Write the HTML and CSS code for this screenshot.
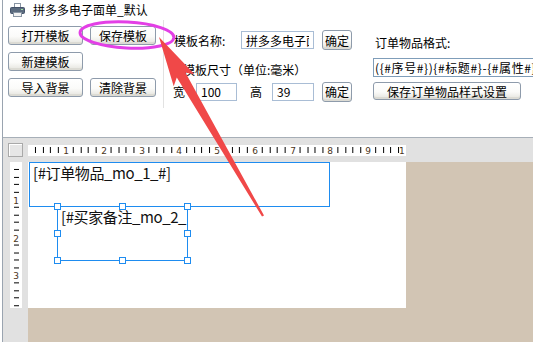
FILE: index.html
```html
<!DOCTYPE html>
<html lang="zh-CN">
<head>
    <meta charset="UTF-8">
    <title>拼多多电子面单_默认</title>
    <link rel="stylesheet" href="styles.css">
</head>
<body>
    <div class="window">
        <div class="title-bar">
            <svg class="app-icon" width="15" height="14" viewBox="0 0 15 14">
                <rect x="4.5" y="0.5" width="6" height="4" fill="#fff" stroke="#8a96a4"/>
                <rect x="0.5" y="4.5" width="14" height="6" rx="1" fill="#5b6b7e" stroke="#45536a"/>
                <rect x="3.5" y="9.5" width="8" height="4" fill="#f2f2f2" stroke="#8a96a4"/>
                <rect x="11" y="6" width="2" height="1" fill="#9fe09f"/>
            </svg>
            <span class="title-text">拼多多电子面单_默认</span>
        </div>

        <div class="toolbar">
            <div class="file-buttons">
                <button class="btn">打开模板</button>
                <button class="btn">保存模板</button>
                <button class="btn">新建模板</button>
                <span></span>
                <button class="btn">导入背景</button>
                <button class="btn">清除背景</button>
            </div>
            <div class="divider"></div>
            <div class="template-panel">
                <div class="field-row">
                    <label class="name-label" for="tplName">模板名称:</label>
                    <input class="text-input name-input" id="tplName" value="拼多多电子面单">
                    <button class="btn ok-btn">确定</button>
                </div>
                <div class="size-title">模板尺寸（单位:毫米）</div>
                <div class="field-row size-row">
                    <label class="w-label" for="tplW">宽</label>
                    <input class="text-input w-input" id="tplW" value="100">
                    <label class="h-label" for="tplH">高</label>
                    <input class="text-input h-input" id="tplH" value="39">
                    <button class="btn ok-btn">确定</button>
                </div>
            </div>
            <div class="format-panel">
                <label class="format-label" for="itemFormat">订单物品格式:</label>
                <input class="text-input format-input" id="itemFormat" value="({#序号#}){#标题#}-{#属性#}">
                <button class="btn format-btn">保存订单物品样式设置</button>
            </div>
        </div>

        <div class="designer">
            <div class="corner"></div>
            <svg class="h-ruler" width="378" height="11" viewBox="0 0 378 11">
                <defs>
                    <pattern id="hTicks" width="37.8" height="11" patternUnits="userSpaceOnUse">
                        <path d="M7.5 2v6M15.5 2v6M22.5 2v6M30.5 2v6" stroke="#000" stroke-width="1"/>
                    </pattern>
                </defs>
                <rect width="378" height="11" fill="url(#hTicks)"/>
                <g class="ruler-num" text-anchor="middle">
                    <text x="38" y="9">1</text>
                    <text x="76" y="9">2</text>
                    <text x="114" y="9">3</text>
                    <text x="151" y="9">4</text>
                    <text x="189" y="9">5</text>
                    <text x="227" y="9">6</text>
                    <text x="265" y="9">7</text>
                    <text x="302" y="9">8</text>
                    <text x="340" y="9">9</text>
                    <text x="371" y="9" text-anchor="start">1</text>
                </g>
            </svg>
            <svg class="v-ruler" width="12" height="146" viewBox="0 0 12 146">
                <defs>
                    <pattern id="vTicks" width="12" height="37.8" patternUnits="userSpaceOnUse">
                        <path d="M4 7.5h5M4 15.5h5M4 22.5h5M4 30.5h5" stroke="#000" stroke-width="1"/>
                    </pattern>
                </defs>
                <rect width="12" height="146" fill="url(#vTicks)"/>
                <g class="ruler-num" text-anchor="middle">
                    <text x="6" y="42">1</text>
                    <text x="6" y="80">2</text>
                    <text x="6" y="117">3</text>
                </g>
            </svg>
            <div class="workspace">
                <div class="page">
                    <div class="field field-items">[#订单物品_mo_1_#]</div>
                    <div class="field field-note">[#买家备注_mo_2_</div>
                    <span class="handle h-nw"></span>
                    <span class="handle h-n"></span>
                    <span class="handle h-ne"></span>
                    <span class="handle h-w"></span>
                    <span class="handle h-e"></span>
                    <span class="handle h-sw"></span>
                    <span class="handle h-s"></span>
                    <span class="handle h-se"></span>
                </div>
            </div>
        </div>
    </div>

    <!-- annotation drawn over the screenshot -->
    <svg class="annotation" width="533" height="342" viewBox="0 0 533 342">
        <ellipse cx="127" cy="35" rx="47" ry="13" fill="none" stroke="#e33fe6" stroke-width="3" transform="rotate(3 127 35)"/>
        <polygon points="159,37 194.5,74.3 185.4,72.6 264,215.5 262,216.5 176.8,77.6 173.7,86.3" fill="#f04848"/>
    </svg>
</body>
</html>
```

FILE: styles.css
```css
body {
    margin: 0;
    width: 533px;
    height: 342px;
    overflow: hidden;
    position: relative;
    background-color: #fff;
    font-family: "Noto Sans CJK SC", "Noto Sans", sans-serif;
    font-size: 12px;
    color: #000;
}

.window {
    height: 342px;
    margin-left: 2px;
    border-left: 1px solid #9aa4b0;
}

.title-bar {
    height: 20px;
    display: flex;
    align-items: center;
    padding-left: 7px;
}

.app-icon {
    margin-right: 8px;
}

.title-text {
    line-height: 14px;
}

/* top control area */
.toolbar {
    display: flex;
    height: 117px;
    border-bottom: 1px solid #a7afb8;
}

.toolbar > * {
    flex: none;
}

.btn {
    font: inherit;
    color: #000;
    padding: 0;
    border: 1px solid #8e9bab;
    border-radius: 3px;
    background: linear-gradient(#ffffff 0%, #fbfbf9 55%, #e4e3dd 100%);
    box-shadow: inset 0 -2px 0 #dcdbd4;
    line-height: 15px;
    cursor: pointer;
}

.file-buttons {
    display: grid;
    grid-template-columns: 75px 66px;
    grid-auto-rows: 19px;
    column-gap: 7px;
    row-gap: 7px;
    align-content: start;
    padding: 6px 0 0 5px;
}

.divider {
    width: 1px;
    height: 88px;
    margin-left: 7px;
    background-color: #e2e2e2;
}

.template-panel {
    margin-left: 9px;
    padding-top: 10px;
}

.field-row {
    display: flex;
    align-items: center;
    height: 20px;
}

.text-input {
    font: inherit;
    height: 18px;
    box-sizing: border-box;
    border: 1px solid #a9bdd5;
    padding: 0 4px;
    background-color: #fff;
    outline: none;
}

.name-label {
    width: 68px;
    padding-left: 1px;
    box-sizing: border-box;
}

.name-input {
    width: 73px;
}

.ok-btn {
    width: 30px;
    height: 20px;
    margin-left: 8px;
}

.size-title {
    margin: 13px 0 0 10px;
    line-height: 14px;
}

.size-row {
    margin-top: 5px;
    height: 19px;
}

.w-label {
    width: 23px;
}

.w-input {
    width: 41px;
}

.h-label {
    width: 22px;
    margin-left: 13px;
}

.h-input {
    width: 42px;
}

.format-panel {
    margin-left: 21px;
    padding-top: 16px;
    display: flex;
    flex-direction: column;
    align-items: flex-start;
}

.format-label {
    line-height: 14px;
    padding-left: 2px;
}

.format-input {
    width: 185px;
    height: 19px;
    margin-top: 8px;
    padding: 0 1px;
    border-color: #7f9db9;
    letter-spacing: 0.6px;
}

.format-btn {
    width: 148px;
    height: 18px;
    margin-top: 5px;
}

/* designer area */
.designer {
    display: grid;
    grid-template-columns: 25px 1fr;
    grid-template-rows: 24px 1fr;
    height: 204px;
    background-color: #e1e1e1;
}

.corner {
    width: 15px;
    height: 14px;
    margin: 5px 0 0 5px;
    box-sizing: border-box;
    border: 1px solid #a9a9a9;
    background-color: #e6e6e6;
    box-shadow: inset 1px 1px 0 #fff;
}

.h-ruler {
    display: block;
    margin-top: 7px;
    background-color: #fff;
    shape-rendering: crispEdges;
}

.v-ruler {
    display: block;
    margin-left: 7px;
    background-color: #fff;
    shape-rendering: crispEdges;
}

.ruler-num {
    font-family: "DejaVu Sans", sans-serif;
    font-size: 9px;
    fill: #4a3420;
}

.workspace {
    background-color: #d2c5b4;
}

.page {
    position: relative;
    width: 378px;
    height: 146px;
    background-color: #fff;
}

.field {
    position: absolute;
    box-sizing: border-box;
    border: 1px solid #1e8cf0;
    padding: 1px 0 0 3px;
    font-size: 15px;
    line-height: 18px;
    letter-spacing: -0.4px;
    color: #111;
    white-space: nowrap;
    overflow: hidden;
}

.field-items {
    left: 1px;
    top: 0;
    width: 301px;
    height: 45px;
}

.field-note {
    left: 29px;
    top: 44px;
    width: 131px;
    height: 55px;
    padding-left: 3px;
}

.handle {
    position: absolute;
    width: 7px;
    height: 7px;
    box-sizing: border-box;
    margin: -3px 0 0 -3px;
    border: 1px solid #1e8cf0;
    background-color: #fff;
}

.h-nw { left: 29px; top: 44px; }
.h-n  { left: 94px; top: 44px; }
.h-ne { left: 159px; top: 44px; }
.h-w  { left: 29px; top: 71px; }
.h-e  { left: 159px; top: 71px; }
.h-sw { left: 29px; top: 98px; }
.h-s  { left: 94px; top: 98px; }
.h-se { left: 159px; top: 98px; }

.annotation {
    position: absolute;
    top: 0;
    left: 0;
    pointer-events: none;
}
```
